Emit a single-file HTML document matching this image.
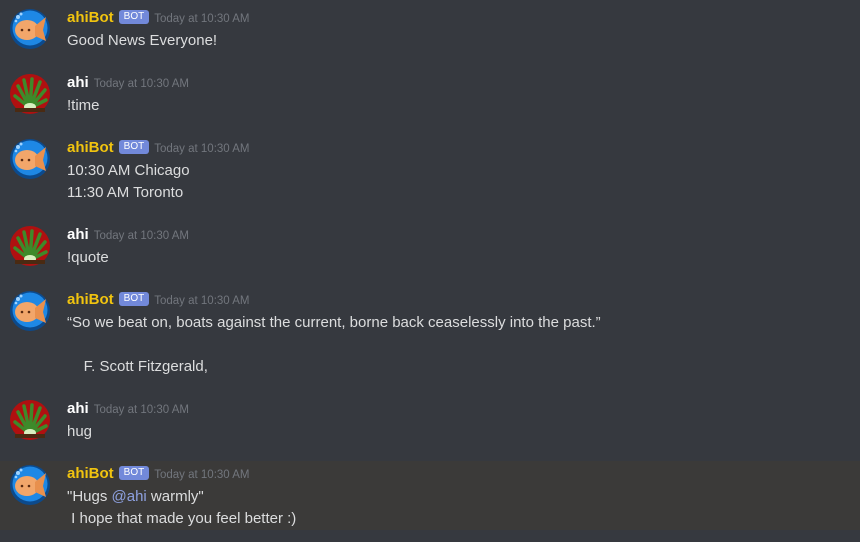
<!DOCTYPE html>
<html><head><meta charset="utf-8"><style>
body{margin:0;width:860px;height:542px;background:#36393f;font-family:"Liberation Sans",sans-serif;overflow:hidden;position:relative}
.g{position:absolute;left:0;width:860px}
.av{position:absolute;left:10px;width:40px;height:40px}
.h{position:absolute;left:67px;height:22px;line-height:22px;white-space:nowrap}
.n{font-size:15px;font-weight:bold;color:#f1c40f}
.n.w{color:#fff}
.b{display:inline-block;background:#7289da;color:#fff;font-size:10px;line-height:14px;height:14px;padding:0 5px;border-radius:3px;vertical-align:3px;margin-left:5px}
.t{color:#72767d;font-size:11.5px;margin-left:5px}
.m{position:absolute;left:67px;color:#dcddde;font-size:15px;line-height:22px;white-space:pre}
.men{color:#8ea1e1}
</style></head><body>
<svg width="0" height="0" style="position:absolute"><defs>
<symbol id="fish" viewBox="0 0 40 40"><circle cx="20" cy="20" r="20" fill="#0c4a8c"/><circle cx="20" cy="19" r="17.5" fill="#1e88e5"/><circle cx="8" cy="8" r="2" fill="#9fd3ff"/><circle cx="11" cy="5" r="1.5" fill="#9fd3ff"/><circle cx="6" cy="12" r="1.3" fill="#9fd3ff"/><ellipse cx="17" cy="21" rx="12" ry="10" fill="#f2a66a"/><path d="M25 17 L36 8 L33 21 L36 32 L25 27Z" fill="#e8904e"/><circle cx="12" cy="21" r="1.3" fill="#5a2a10"/><circle cx="19" cy="21" r="1.3" fill="#5a2a10"/></symbol>
<symbol id="plant" viewBox="0 0 40 40"><circle cx="20" cy="20" r="20" fill="#b01010"/><path d="M20 34 L8 12 M20 34 L14 6 M20 34 L22 5 M20 34 L30 8 M20 34 L35 16 M20 34 L5 22 M20 34 L36 26" stroke="#3e8a2a" stroke-width="3.5" stroke-linecap="round"/><ellipse cx="20" cy="33" rx="6" ry="4" fill="#d8f0c0"/><rect x="5" y="34" width="30" height="4" fill="#4a2a12"/></symbol>
</defs></svg>

<div class="g" style="top:0">
<svg class="av" style="top:9px"><use href="#fish"/></svg>
<div class="h" style="top:7px"><span class="n">ahiBot</span><span class="b">BOT</span><span class="t">Today at 10:30 AM</span></div>
<div class="m" style="top:30px">Good News Everyone!</div>
</div>

<div class="g" style="top:65px">
<svg class="av" style="top:9px"><use href="#plant"/></svg>
<div class="h" style="top:7px"><span class="n w">ahi</span><span class="t">Today at 10:30 AM</span></div>
<div class="m" style="top:30px">!time</div>
</div>

<div class="g" style="top:130px">
<svg class="av" style="top:9px"><use href="#fish"/></svg>
<div class="h" style="top:7px"><span class="n">ahiBot</span><span class="b">BOT</span><span class="t">Today at 10:30 AM</span></div>
<div class="m" style="top:30px">10:30 AM Chicago
11:30 AM Toronto</div>
</div>

<div class="g" style="top:217px">
<svg class="av" style="top:9px"><use href="#plant"/></svg>
<div class="h" style="top:7px"><span class="n w">ahi</span><span class="t">Today at 10:30 AM</span></div>
<div class="m" style="top:30px">!quote</div>
</div>

<div class="g" style="top:282px">
<svg class="av" style="top:9px"><use href="#fish"/></svg>
<div class="h" style="top:7px"><span class="n">ahiBot</span><span class="b">BOT</span><span class="t">Today at 10:30 AM</span></div>
<div class="m" style="top:30px">“So we beat on, boats against the current, borne back ceaselessly into the past.”

    F. Scott Fitzgerald,</div>
</div>

<div class="g" style="top:391px">
<svg class="av" style="top:9px"><use href="#plant"/></svg>
<div class="h" style="top:7px"><span class="n w">ahi</span><span class="t">Today at 10:30 AM</span></div>
<div class="m" style="top:30px">hug</div>
</div>

<div class="g" style="top:461px;height:69px;background:#3b3a39">
<svg class="av" style="top:4px"><use href="#fish"/></svg>
<div class="h" style="top:2px"><span class="n">ahiBot</span><span class="b">BOT</span><span class="t">Today at 10:30 AM</span></div>
<div class="m" style="top:25px">"Hugs <span class="men">@ahi</span> warmly"
 I hope that made you feel better :)</div>
</div>
</body></html>
